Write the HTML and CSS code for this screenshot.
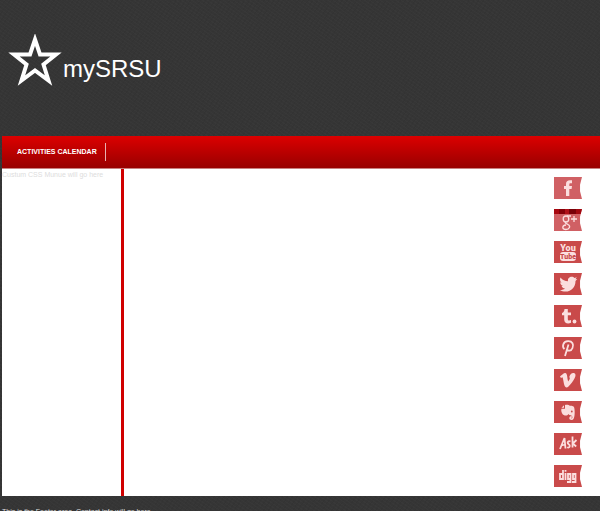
FILE: index.html
```html
<!DOCTYPE html>
<html lang="en">
<head>
  <meta charset="UTF-8">
  <title>mySRSU</title>
  <link rel="stylesheet" href="styles.css">
</head>
<body>

  <header class="header">
    <svg class="star" viewBox="0 0 54 52" aria-hidden="true">
      <path d="M27 5.500 L32 20.500 H48 L35.500 30.500 L40.500 46.500 L27 36.500 L13.500 46.500 L18.500 30.500 L6 20.500 H22 Z" fill="none" stroke="#fff" stroke-width="4"/>
    </svg>
    <h1>mySRSU</h1>
  </header>

  <nav class="nav">
    <a href="#">ACTIVITIES CALENDAR</a>
  </nav>

  <div class="content">
    <aside class="sidebar">Custum CSS Munue will go here</aside>
    <main class="main"></main>
    <div class="social">
      <a class="faded" href="#" aria-label="Facebook">
        <svg viewBox="0 0 28 22"><path d="M12 19V12H10V9H12V7C12 4.500 13.500 3.300 16 3.300H18V6.300H16.500C15.600 6.300 15.300 6.700 15.300 7.500V9H18L17.600 12H15.300V19Z"/></svg>
      </a>
      <a class="faded google" href="#" aria-label="Google Plus">
        <svg viewBox="0 0 28 22">
          <g class="line"><ellipse cx="12" cy="10" rx="2.800" ry="3"/><path d="M13 7H17M12 13C10.500 14 12 14.500 14 15.500C17 17 15.500 20.500 12 20.500C8 20.500 7.500 16.500 12 16M20 7V13M17 10H23"/></g>
        </svg>
      </a>
      <a href="#" aria-label="YouTube">
        <svg viewBox="0 0 28 22">
          <text class="you" x="14" y="10" text-anchor="middle">You</text>
          <rect x="6" y="11" width="16" height="9" rx="3"/>
          <text class="tube" x="14" y="18" text-anchor="middle">Tube</text>
        </svg>
      </a>
      <a href="#" aria-label="Twitter">
        <svg viewBox="0 0 28 22"><path d="M6.500 4.500C8.500 7 11 8.200 14 8.300C13.500 5.500 15.500 3.800 17.700 3.800C18.800 3.800 19.800 4.300 20.500 5L22.800 4.200L21.500 6.300L23.300 6L21.500 7.900C21.500 14 17.500 18.500 11.500 18.500C9.400 18.500 7.500 18 6 17C8 17.100 9.700 16.500 11 15.500C9.300 15.300 8.100 14.300 7.600 13H9.100C7.300 12.500 6.200 11 6.200 9.300L7.700 9.700C6 8.500 5.600 6.300 6.500 4.500Z"/></svg>
      </a>
      <a href="#" aria-label="Tumblr">
        <svg viewBox="0 0 28 22"><path d="M10.500 4H13.800V7.500H17V10.300H13.800V14C13.800 15.800 15.300 15.800 17 15V17.800C13.500 19.300 10.200 18 10.200 14.800V10.300H8V8C9.700 7.400 10.300 6 10.500 4Z"/><circle cx="20.500" cy="16.500" r="1.900"/></svg>
      </a>
      <a href="#" aria-label="Pinterest">
        <svg viewBox="0 0 28 22"><path class="line pin" d="M10.500 12C8 10 8.500 4.500 14 4.200C18.500 4 20 7.500 18.500 11C17.300 14.300 13.500 14.500 12.800 12M14.500 7.500L11 19"/></svg>
      </a>
      <a href="#" aria-label="Vimeo">
        <svg viewBox="0 0 28 22"><path d="M6 7.500C8 6 9.500 4 11.200 4C13.500 4 13 8.500 14.200 12.500C15.500 11 16.700 8.500 15.200 8.300C16 5 18 3.500 20 4C24 5.200 19.500 12.500 14.500 17.500C12.500 19.500 11 18.300 10.300 16C9.500 13 9 8.500 8.300 8.300L7 9Z"/></svg>
      </a>
      <a href="#" aria-label="Evernote">
        <svg viewBox="0 0 28 22"><path d="M11 4C13 3.300 15 4 16 4.700C18.500 4.800 20 5 20.300 7C21 11 20.800 16 19.500 18C18.500 19.500 15.300 19 15.300 17.200C15.300 15.300 17 15 18 15.500V16.500C17 16.400 16.800 17.500 17.800 17.500C19 17 18.500 14.500 16.500 14.300C14.500 14 14.800 13 14.300 13C13.500 15.300 9.500 15 8.200 12.500C7.300 11 7 9 7.500 7.800H11Z"/><path d="M10 4.300V6.800H7.500Z"/><circle class="eye" cx="17.800" cy="10.500" r=".9"/></svg>
      </a>
      <a href="#" aria-label="Ask">
        <svg viewBox="0 0 28 22"><g class="line ask"><path d="M6 16L10.500 5L11.500 15.500M7.500 12.500L11.300 11.500M16.500 8.500C14.500 7.500 12.500 9.500 14.500 11C17 12.700 15.500 15.500 13.200 14.200M18.500 3.500V14.500M22.500 7L18.800 10.500L22.200 13.500"/></g></svg>
      </a>
      <a href="#" aria-label="Digg">
        <svg viewBox="0 0 28 22"><path class="line digg" d="M9 5V14H6V9H9M11.500 8V15M11.500 5V6.700M16.500 14H14V9H16.500V17H13M21.500 14H19V9H21.500V17H18"/></svg>
      </a>
    </div>
  </div>

  <footer class="footer">This is the Footer area. Contact info will go here</footer>

</body>
</html>
```
FILE: styles.css
```css
html {
  height: 100%;
  overflow: hidden;
}

body {
  margin: 0;
  padding-left: 2px;
  font-family: "Liberation Sans", Arial, sans-serif;
  font-size: 7px;
  color: #ddd;
  background-color: #353535;
  background-image:
    repeating-linear-gradient(35deg, rgba(255, 255, 255, 0.015) 0 1px, transparent 1px 3px),
    repeating-linear-gradient(125deg, rgba(0, 0, 0, 0.04) 0 1px, transparent 1px 4px);
}

.header {
  display: flex;
  align-items: center;
  box-sizing: border-box;
  height: 136px;
  padding: 0 6px 16px;
}

.star {
  width: 54px;
  height: 52px;
}

.header h1 {
  margin: 18px 0 0 1px;
  font-size: 24px;
  font-weight: normal;
  line-height: 28px;
  color: #fff;
}

.nav {
  display: flex;
  align-items: center;
  height: 32px;
  padding-left: 7px;
  background: linear-gradient(#dc0000, #980000);
  border-bottom: 1px solid #c98080;
}

.nav a {
  padding: 0 8px;
  border-right: 1px solid #e8b0b0;
  font-weight: bold;
  line-height: 18px;
  color: #fff;
  text-decoration: none;
}

.content {
  display: flex;
  min-height: 327px;
  background: #fff;
}

.sidebar {
  box-sizing: border-box;
  width: 122px;
  border-right: 3px solid #d00000;
  line-height: 12px;
  white-space: nowrap;
}

.main {
  flex: 1;
}

.social {
  display: flex;
  flex-direction: column;
  gap: 10px;
  padding: 8px 18px 0 0;
}

/* ribbon with a notch on the right side */
.social a {
  width: 28px;
  height: 22px;
  background: #c94a4a;
  clip-path: polygon(0 0, 100% 0, 93% 35%, 93% 65%, 100% 100%, 0 100%);
}

.social .faded {
  background: #d06064;
}

.social .google {
  background:
    linear-gradient(90deg, #a80810 0 18%, #850008 18% 38%, #b01018 38% 55%, #780008 55% 78%, #a00810 78%) top / 100% 5px no-repeat,
    #d06064;
}

.social svg {
  display: block;
  width: 28px;
  height: 22px;
  fill: #fbdede;
}

.social .line {
  fill: none;
  stroke: #fbdede;
  stroke-width: 1.3;
}

.social .pin,
.social .ask {
  stroke-width: 1.8;
}

.social .digg {
  stroke-width: 1.8;
}

.you,
.tube {
  font-family: Roboto, "Liberation Sans", sans-serif;
  font-size: 9px;
  font-weight: 900;
}

.tube {
  font-size: 7px;
  fill: #c94a4a;
}

.eye {
  fill: #c94a4a;
}

.footer {
  padding-top: 11px;
  line-height: 10px;
}
```
